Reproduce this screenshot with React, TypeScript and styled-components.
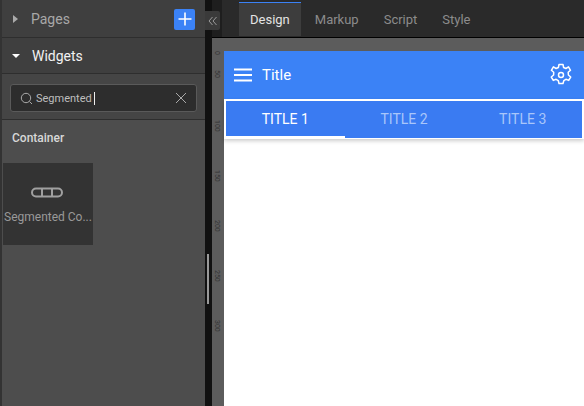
import * as React from "react";
import styled, { createGlobalStyle } from "styled-components";

const GlobalStyle = createGlobalStyle`
  html, body {
    margin: 0;
    height: 100%;
    background: #111;
    overflow: hidden;
    font-family: Roboto, "Liberation Sans", sans-serif;
  }
`;

const ticks = [
  { label: "0", size: 19 },
  { label: "50", size: 50 },
  { label: "100", size: 50 },
  { label: "150", size: 50 },
  { label: "200", size: 50 },
  { label: "250", size: 50 },
  { label: "300", size: 50 },
];

export default function App() {
  return (
    <Page>
      <GlobalStyle />
      <Sidebar>
        <Accordion>
          <Arrow />
          <AccordionTitle>Pages</AccordionTitle>
          <AddButton>
            <svg width="14" height="14" viewBox="0 0 14 14">
              <path d="M7 0.5v13M0.5 7h13" stroke="#fff" strokeWidth="1.6" />
            </svg>
          </AddButton>
        </Accordion>
        <Accordion $open>
          <Arrow $open />
          <AccordionTitle $open>Widgets</AccordionTitle>
        </Accordion>
        <SearchArea>
          <SearchBox>
            <svg width="13" height="13" viewBox="0 0 13 13" fill="none">
              <circle cx="6" cy="6" r="4.7" stroke="#aaa" strokeWidth="1" />
              <path d="M9.5 9.5l2.5 2.5" stroke="#aaa" strokeWidth="1" />
            </svg>
            <SearchText>Segmented</SearchText>
            <Caret />
            <ClearIcon width="12" height="12" viewBox="0 0 12 12">
              <path d="M1 1l10 10M11 1L1 11" stroke="#aaa" strokeWidth="1" />
            </ClearIcon>
          </SearchBox>
        </SearchArea>
        <Results>
          <GroupTitle>Container</GroupTitle>
          <WidgetCard>
            <svg width="34" height="12" viewBox="0 0 34 12" fill="none">
              <rect x="1" y="1.5" width="30" height="8" rx="4" stroke="#a0a0a0" strokeWidth="2" />
              <path d="M11 1.5v8M21 1.5v8" stroke="#a0a0a0" strokeWidth="2" />
            </svg>
            <WidgetLabel>Segmented Co...</WidgetLabel>
          </WidgetCard>
        </Results>
      </Sidebar>
      <Gutter>
        <CollapseTab>
          <svg width="10" height="10" viewBox="0 0 10 10" fill="none">
            <path d="M4.5 1L1 5l3.5 4M8.5 1L5 5l3.5 4" stroke="#999" strokeWidth="1" />
          </svg>
        </CollapseTab>
        <ScrollThumb />
      </Gutter>
      <Main>
        <TabBar>
          <Tab $active>Design</Tab>
          <Tab>Markup</Tab>
          <Tab>Script</Tab>
          <Tab>Style</Tab>
        </TabBar>
        <Canvas>
          <TopRuler />
          <CanvasRow>
            <Ruler>
              {ticks.map((t) => (
                <RulerCell key={t.label} $size={t.size}>
                  <RulerLabel>{t.label}</RulerLabel>
                </RulerCell>
              ))}
            </Ruler>
            <Screen>
              <AppBar>
                <svg width="18" height="14" viewBox="0 0 18 14">
                  <path d="M0 1.5h18M0 7h18M0 12.5h18" stroke="#fff" strokeWidth="2" />
                </svg>
                <AppTitle>Title</AppTitle>
                <GearIcon width="24" height="24" viewBox="0 0 24 24" fill="none">
                  <path
                    d="M10 1.5h4l.6 3 2.3 1 2.6-1.6 2 3.4-2.3 2 .2 2.7 2.3 2-2 3.4-2.8-1.1-2.1 1.4-.8 2.8h-4l-.7-2.8-2.2-1.4-2.8 1.1-2-3.4 2.3-2 .1-2.7-2.3-2 2-3.4 2.7 1.6 2.3-1z"
                    stroke="#fff"
                    strokeWidth="1.5"
                    strokeLinejoin="round"
                  />
                  <circle cx="12" cy="12" r="2.5" stroke="#fff" strokeWidth="1.5" />
                </GearIcon>
              </AppBar>
              <Segmented>
                <SegmentTabs>
                  <Segment $active>TITLE 1</Segment>
                  <Segment>TITLE 2</Segment>
                  <Segment>TITLE 3</Segment>
                </SegmentTabs>
              </Segmented>
            </Screen>
          </CanvasRow>
        </Canvas>
      </Main>
    </Page>
  );
}

const Page = styled.div`
  display: flex;
  width: 584px;
  height: 406px;
  overflow: hidden;
  background: #111;
`;

const Sidebar = styled.aside`
  width: 205px;
  height: 406px;
  flex: none;
  box-sizing: border-box;
  padding-top: 1px;
  border-left: 2px solid #333;
  background: #3f3f3f;
  display: flex;
  flex-direction: column;
`;

const Accordion = styled.div<{ $open?: boolean }>`
  height: 36px;
  flex: none;
  display: flex;
  align-items: center;
  padding: 0 10px 0 11px;
  border-bottom: 1px solid #2e2e2e;
  ${(p) => p.$open && "height: 35px;"}
`;

const Arrow = styled.span<{ $open?: boolean }>`
  width: 0;
  height: 0;
  margin-right: 13px;
  ${(p) =>
    p.$open
      ? `border-left: 4px solid transparent;
         border-right: 4px solid transparent;
         border-top: 4px solid #fff;
         margin-left: -1px;
         margin-right: 12px;`
      : `border-top: 4px solid transparent;
         border-bottom: 4px solid transparent;
         border-left: 5px solid #aaa;`}
`;

const AccordionTitle = styled.span<{ $open?: boolean }>`
  font-size: 14px;
  color: ${(p) => (p.$open ? "#f2f2f2" : "#a8a8a8")};
`;

const AddButton = styled.button`
  width: 21px;
  height: 21px;
  margin-left: auto;
  margin-right: 0;
  padding: 0;
  border: 0;
  border-radius: 2px;
  background: #3b82f6;
  display: flex;
  align-items: center;
  justify-content: center;
`;

const SearchArea = styled.div`
  height: 46px;
  flex: none;
  box-sizing: border-box;
  padding: 10px 8px 0 8px;
  border-bottom: 1px solid #2e2e2e;
  background: #454545;
`;

const SearchBox = styled.div`
  height: 28px;
  box-sizing: border-box;
  display: flex;
  align-items: center;
  padding: 0 9px;
  border: 1px solid #5a5a5a;
  border-radius: 3px;
  background: #2d2d2d;
`;

const SearchText = styled.span`
  margin-left: 3px;
  font-size: 11px;
  color: #bdbdbd;
`;

const Caret = styled.span`
  width: 1px;
  height: 13px;
  margin-left: 2px;
  background: #eee;
`;

const ClearIcon = styled.svg`
  margin-left: auto;
`;

const Results = styled.div`
  flex: 1;
  background: #4d4d4d;
`;

const GroupTitle = styled.div`
  padding: 11px 0 0 10px;
  height: 31px;
  box-sizing: border-box;
  font-size: 12px;
  font-weight: 500;
  color: #d8d8d8;
`;

const WidgetCard = styled.div`
  width: 90px;
  height: 82px;
  margin-top: 12px;
  margin-left: 1px;
  background: #333;
  display: flex;
  flex-direction: column;
  align-items: center;
  box-sizing: border-box;
  padding-top: 24px;
`;

const WidgetLabel = styled.span`
  margin-top: 11px;
  font-size: 12px;
  color: #999;
  white-space: nowrap;
`;

const Gutter = styled.div`
  position: relative;
  width: 7px;
  flex: none;
  background: #111;
`;

const CollapseTab = styled.div`
  position: absolute;
  left: 0;
  top: 11px;
  width: 15px;
  height: 19px;
  border-radius: 0 2px 2px 0;
  background: #3a3a3a;
  display: flex;
  align-items: center;
  justify-content: center;
  z-index: 2;
`;

const ScrollThumb = styled.div`
  position: absolute;
  left: 2px;
  top: 254px;
  width: 2px;
  height: 50px;
  background: #999;
`;

const Main = styled.main`
  flex: 1;
  display: flex;
  flex-direction: column;
  min-width: 0;
`;

const TabBar = styled.nav`
  height: 38px;
  flex: none;
  box-sizing: border-box;
  display: flex;
  padding: 2px 0 1px 27px;
  background: linear-gradient(90deg, #1e1e1e 0, #1e1e1e 10px, #2a2a2a 10px);
  border-bottom: 1px solid #000;
`;

const Tab = styled.div<{ $active?: boolean }>`
  padding: 0 11px;
  display: flex;
  align-items: center;
  margin-right: 3px;
  font-size: 13px;
  color: ${(p) => (p.$active ? "#e4e4e4" : "#8c8c8c")};
  background: ${(p) => (p.$active ? "#3d3d3d" : "transparent")};
  border-top: 1px solid ${(p) => (p.$active ? "#3b82f6" : "transparent")};
`;

const Canvas = styled.div`
  flex: 1;
  display: flex;
  flex-direction: column;
  background: #5c5c5c;
`;

const TopRuler = styled.div`
  height: 13px;
  flex: none;
`;

const CanvasRow = styled.div`
  flex: 1;
  display: flex;
  min-height: 0;
`;

const Ruler = styled.div`
  width: 12px;
  flex: none;
  overflow: hidden;
`;

const RulerCell = styled.div<{ $size: number }>`
  height: ${(p) => p.$size}px;
  position: relative;
`;

const RulerLabel = styled.span`
  position: absolute;
  left: 1px;
  top: 0;
  font-size: 7px;
  color: #333;
  writing-mode: vertical-rl;
`;

const Screen = styled.div`
  flex: 1;
  background: #fff;
  min-width: 0;
`;

const AppBar = styled.header`
  height: 48px;
  box-sizing: border-box;
  display: flex;
  align-items: center;
  padding: 0 11px 0 10px;
  background: #3b82f6;
`;

const AppTitle = styled.span`
  margin-left: 10px;
  font-size: 15px;
  color: #fff;
`;

const GearIcon = styled.svg`
  margin-left: auto;
`;

const Segmented = styled.div`
  box-sizing: border-box;
  height: 40px;
  padding: 1px;
  border: 1px dotted #fff;
  border-bottom: 0;
  box-shadow: 0 2px 4px rgba(0, 0, 0, 0.2);
`;

const SegmentTabs = styled.div`
  height: 37px;
  display: flex;
  background: #3a7bf2;
`;

const Segment = styled.div<{ $active?: boolean }>`
  flex: 1;
  display: flex;
  align-items: center;
  justify-content: center;
  font-size: 14px;
  color: ${(p) => (p.$active ? "#fff" : "#a9c6fa")};
  border-bottom: 2px solid ${(p) => (p.$active ? "#fff" : "transparent")};
`;
